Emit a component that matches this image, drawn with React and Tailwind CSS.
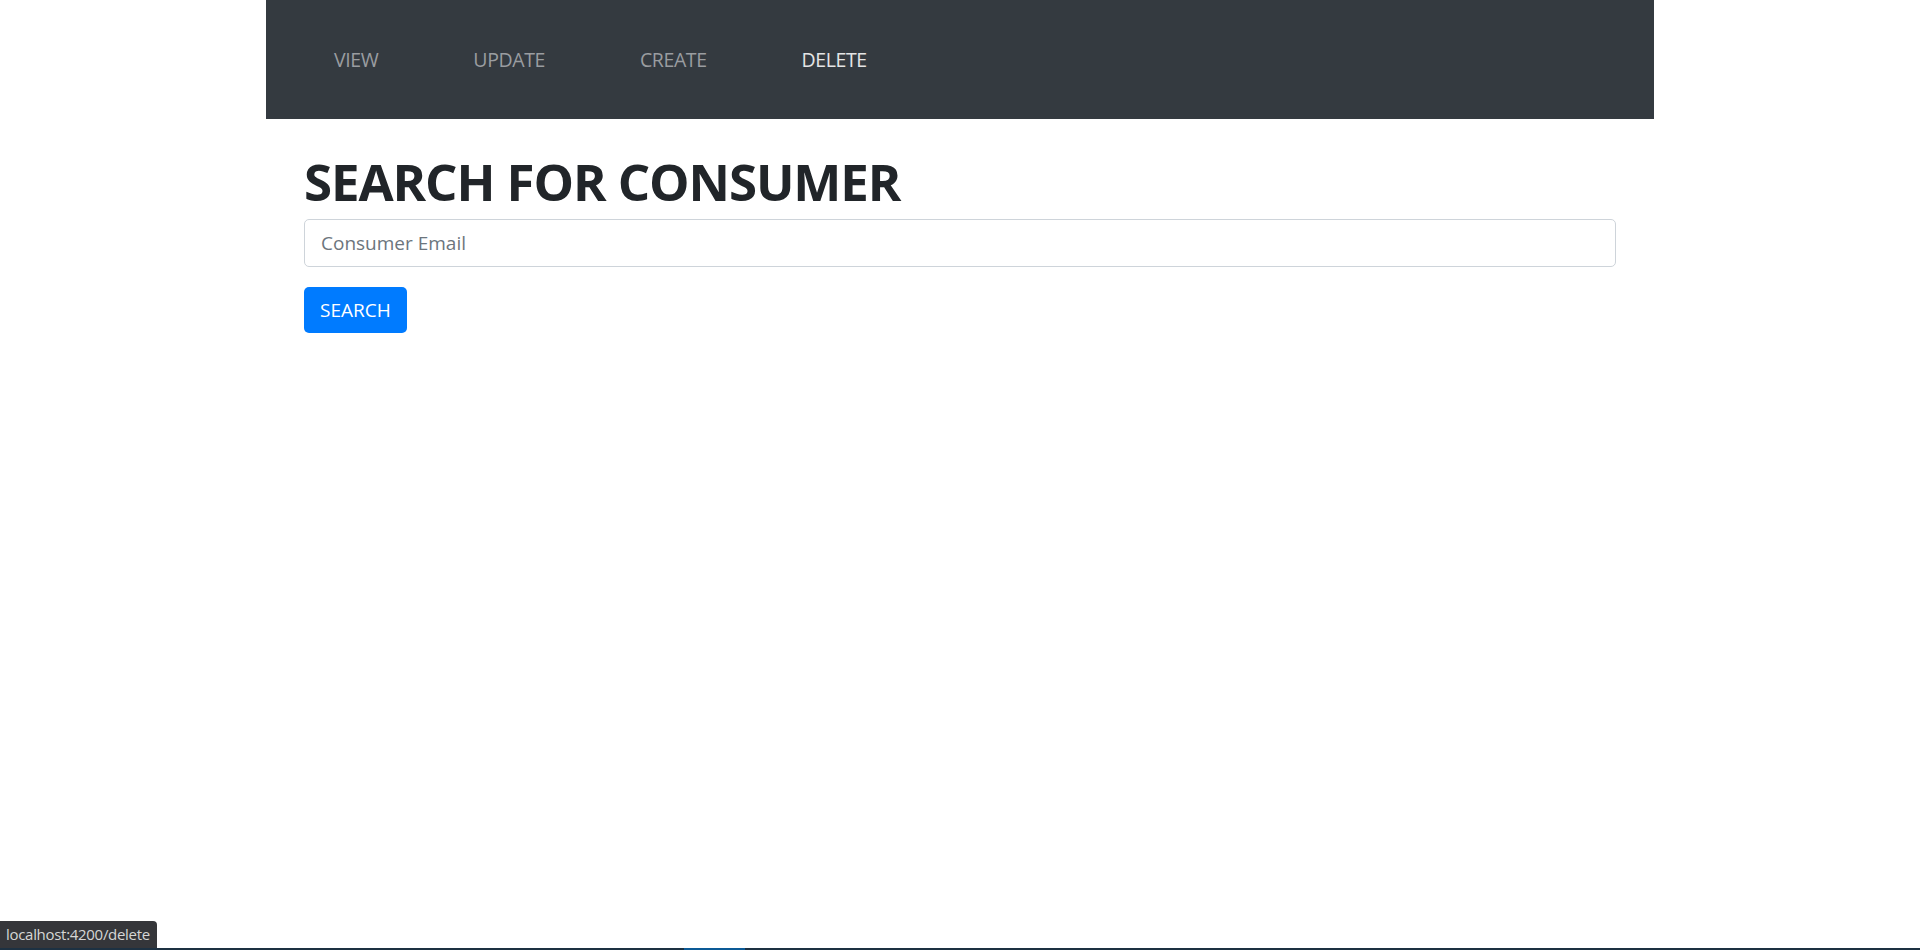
import { useState } from "react";

const links = ["VIEW", "UPDATE", "CREATE", "DELETE"];

export default function App() {
  const [email, setEmail] = useState("");
  const active = "DELETE";

  return (
    <div className="relative min-h-screen w-full bg-white font-['Open_Sans','Noto_Sans',sans-serif] text-[#212529]">
      <div className="ml-[266px] w-[1388px]">
        {/* navbar */}
        <nav className="flex h-[119px] items-center gap-[95px] bg-[#343a40] pl-[68px]">
          {links.map((l) => (
            <a
              key={l}
              href="#"
              className={`text-[19.5px] tracking-[-0.4px] ${l === active ? "text-[#e4e5e6]" : "text-[#9a9da0]"}`}
            >
              {l}
            </a>
          ))}
        </nav>

        {/* search */}
        <main className="px-[38px] pt-[32px]">
          <h1 className="text-[51px] font-bold leading-[60px] tracking-[-1.1px]">SEARCH FOR CONSUMER</h1>
          <input
            value={email}
            onChange={(e) => setEmail(e.target.value)}
            placeholder="Consumer Email"
            className="mt-[8px] block h-[48px] w-full rounded-[5px] border border-[#ced4da] px-[16px] text-[19px] text-[#495057] outline-none placeholder:text-[#6c757d]"
          />
          <button className="mt-[20px] h-[46px] rounded-[5px] bg-[#007bff] px-[16px] text-[19px] text-white">
            SEARCH
          </button>
        </main>
      </div>

      {/* status tooltip */}
      <div className="absolute bottom-[2px] left-0 flex h-[27px] w-[157px] items-center rounded-tr-[4px] bg-[#35363a] pl-[6px] text-[15px] tracking-[-0.3px] text-[#d6d6d6]">
        localhost:4200/delete
      </div>
      <div className="absolute bottom-0 left-0 flex h-[2px] w-full bg-[#1d3142]">
        <div className="ml-[684px] w-[61px] bg-[#0c5a96]" />
      </div>
    </div>
  );
}
